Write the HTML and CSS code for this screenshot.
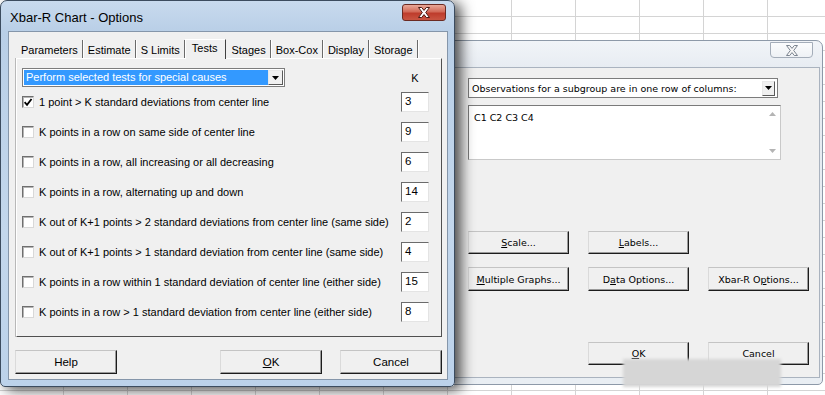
FILE: index.html
```html
<!DOCTYPE html>
<html lang="en">
<head>
    <meta charset="UTF-8" />
    <title>Xbar-R Chart - Options</title>
    <link rel="stylesheet" href="styles.css">
</head>
<body>

<div class="win back">
    <div class="titlebar">
        <span class="close gray">
            <svg width="14" height="11" viewBox="0 0 14 11"><path d="M1.5 0.5h3.2L7 3.4 9.3 0.5h3.2L8.7 5.5l3.8 5H9.3L7 7.6 4.7 10.5H1.5l3.8-5z" fill="#f6f6f6" stroke="#7c8591" stroke-width="1"/></svg>
        </span>
    </div>
    <div class="client">
        <div class="combo plain">
            <span class="combo-text">Observations for a subgroup are in one row of columns:</span>
            <span class="combo-btn"><svg width="7" height="4" viewBox="0 0 7 4"><path d="M0 0h7L3.5 4z" fill="#000"/></svg></span>
        </div>
        <div class="listbox">
            <span class="list-text">C1 C2 C3 C4</span>
            <span class="scroll">
                <svg width="7" height="4" viewBox="0 0 7 4"><path d="M0 4h7L3.5 0z" fill="#b4b4b4"/></svg>
                <svg width="7" height="4" viewBox="0 0 7 4"><path d="M0 0h7L3.5 4z" fill="#b4b4b4"/></svg>
            </span>
        </div>
        <div class="btn-row first">
            <button class="btn"><u>S</u>cale...</button>
            <button class="btn"><u>L</u>abels...</button>
        </div>
        <div class="btn-row second">
            <button class="btn"><u>M</u>ultiple Graphs...</button>
            <button class="btn">D<u>a</u>ta Options...</button>
            <button class="btn">Xbar-R O<u>p</u>tions...</button>
        </div>
        <div class="btn-row third">
            <button class="btn"><u>O</u>K</button>
            <button class="btn">Cancel</button>
        </div>
    </div>
</div>

<div class="win front">
    <div class="titlebar">
        <span class="title">Xbar-R Chart - Options</span>
        <span class="close red">
            <svg width="14" height="11" viewBox="0 0 14 11"><path d="M1.5 0.5h3.2L7 3.4 9.3 0.5h3.2L8.7 5.5l3.8 5H9.3L7 7.6 4.7 10.5H1.5l3.8-5z" fill="#fff" stroke="#4a1a14" stroke-width="1"/></svg>
        </span>
    </div>
    <div class="client">
        <div class="tabs">
            <span class="tab">Parameters</span>
            <span class="tab">Estimate</span>
            <span class="tab">S Limits</span>
            <span class="tab active">Tests</span>
            <span class="tab">Stages</span>
            <span class="tab">Box-Cox</span>
            <span class="tab">Display</span>
            <span class="tab">Storage</span>
        </div>
        <div class="panel">
            <div class="panel-head">
                <div class="combo selected">
                    <span class="combo-text">Perform selected tests for special causes</span>
                    <span class="combo-btn"><svg width="7" height="4" viewBox="0 0 7 4"><path d="M0 0h7L3.5 4z" fill="#000"/></svg></span>
                </div>
                <span class="k-label">K</span>
            </div>
            <div class="test-row">
                <span class="check on"><svg width="11" height="11" viewBox="0 0 11 11"><path d="M1.8 5.2l2.6 2.8L9.4 1.6" fill="none" stroke="#000" stroke-width="2"/></svg></span>
                <span class="test-label">1 point &gt; K standard deviations from center line</span>
                <span class="k-input">3</span>
            </div>
            <div class="test-row">
                <span class="check"></span>
                <span class="test-label">K points in a row on same side of center line</span>
                <span class="k-input">9</span>
            </div>
            <div class="test-row">
                <span class="check"></span>
                <span class="test-label">K points in a row, all increasing or all decreasing</span>
                <span class="k-input">6</span>
            </div>
            <div class="test-row">
                <span class="check"></span>
                <span class="test-label">K points in a row, alternating up and down</span>
                <span class="k-input">14</span>
            </div>
            <div class="test-row">
                <span class="check"></span>
                <span class="test-label">K out of K+1 points &gt; 2 standard deviations from center line (same side)</span>
                <span class="k-input">2</span>
            </div>
            <div class="test-row">
                <span class="check"></span>
                <span class="test-label">K out of K+1 points &gt; 1 standard deviation from center line (same side)</span>
                <span class="k-input">4</span>
            </div>
            <div class="test-row">
                <span class="check"></span>
                <span class="test-label">K points in a row within 1 standard deviation of center line (either side)</span>
                <span class="k-input">15</span>
            </div>
            <div class="test-row">
                <span class="check"></span>
                <span class="test-label">K points in a row &gt; 1 standard deviation from center line (either side)</span>
                <span class="k-input">8</span>
            </div>
        </div>
        <div class="actions">
            <button class="btn">Help</button>
            <button class="btn ok"><u>O</u>K</button>
            <button class="btn">Cancel</button>
        </div>
    </div>
</div>

<div class="smudge"></div>

</body>
</html>
```

FILE: styles.css
```css
body {
    margin: 0;
    width: 825px;
    height: 395px;
    overflow: hidden;
    position: relative;
    font-family: "Liberation Sans", Arial, sans-serif;
    font-size: 11px;
    color: #000;
    background-color: #fff;
    background-image:
        linear-gradient(to right, #d4d4d4 1px, transparent 1px),
        linear-gradient(to bottom, #d4d4d4 1px, transparent 1px);
    background-size: 64px 17px;
    background-position: 63px 16px;
}

/* windows */
.win {
    position: absolute;
    box-sizing: border-box;
    border: 1px solid;
    border-radius: 7px 7px 5px 5px;
    display: flex;
    flex-direction: column;
}
.front {
    left: 0;
    top: 0;
    width: 455px;
    height: 387px;
    padding: 0 6px 6px 7px;
    border-color: #3c4c5f;
    background: linear-gradient(#c8daee, #b9cfe7 30px, #c3d7ec 60%, #bcd2ea);
    box-shadow: 6px 3px 14px rgba(0, 0, 0, 0.7);
    z-index: 2;
}
.back {
    left: 440px;
    top: 40px;
    width: 383px;
    height: 345px;
    padding: 0 2px 6px 8px;
    border-color: #8d99a8;
    background: linear-gradient(#f1f4f8, #e6ebf1 30px, #e9eef3);
    z-index: 1;
}
.titlebar {
    flex-shrink: 0;
    display: flex;
    align-items: flex-start;
}
.front .titlebar {
    height: 30px;
}
.back .titlebar {
    height: 26px;
}
.title {
    font-size: 13px;
    margin: 9px 0 0 2px;
}
.close {
    box-sizing: border-box;
    margin-left: auto;
    display: flex;
    align-items: center;
    justify-content: center;
    border: 1px solid;
    border-radius: 0 0 4px 4px;
}
.close.red {
    width: 44px;
    height: 17px;
    margin-top: 3px;
    margin-right: 2px;
    border-color: #6b2a22;
    border-radius: 3px;
    background: linear-gradient(#e9a899, #d26a58 45%, #be3c2c 55%, #c95542);
}
.close.gray {
    width: 43px;
    height: 16px;
    margin-top: 1px;
    margin-right: 7px;
    border-color: #a4adb9;
    background: linear-gradient(#fbfcfd, #eef1f5);
}
.client {
    flex: 1;
    box-sizing: border-box;
    background: #f0f0f0;
    border: 1px solid #8596aa;
    display: flex;
    flex-direction: column;
}
.front .client {
    padding: 6px 5px 0 7px;
}
.back .client {
    padding: 10px 0 0 18px;
    border-color: #aab3bf;
    font-family: "DejaVu Sans", Verdana, sans-serif;
    font-size: 9.5px;
}

/* tabs */
.tabs {
    height: 20px;
    display: flex;
    align-items: flex-end;
}
.tab {
    height: 18px;
    box-sizing: border-box;
    padding: 3px 4px 0 5px;
    border-right: 1px solid #6a6a6a;
    box-shadow: 1px 0 0 #fff;
    line-height: 14px;
}
.tab.active {
    height: 20px;
    padding: 1px 8px 0 6px;
    border-left: 1px solid #fff;
    border-top: 1px solid #fff;
    border-right: 1px solid #404040;
    box-shadow: none;
    background: #f0f0f0;
    position: relative;
    top: 1px;
}
.panel {
    height: 279px;
    box-sizing: border-box;
    padding: 9px 12px 0 5px;
    border: 1px solid;
    border-color: #fff #505050 #505050 #fff;
    box-shadow: -1px 0 0 #b8b8b8;
}
.panel-head {
    height: 19px;
    display: flex;
    align-items: center;
    justify-content: space-between;
}
.k-label {
    width: 28px;
    text-align: center;
    padding-top: 1px;
}
.test-row {
    height: 30px;
    display: flex;
    align-items: center;
}
.check {
    width: 12px;
    height: 12px;
    box-sizing: border-box;
    flex-shrink: 0;
    display: flex;
    align-items: center;
    justify-content: center;
    border: 1px solid;
    border-color: #6f6f6f #d8d8d8 #d8d8d8 #6f6f6f;
    background: #fff;
    box-shadow: inset 1px 1px 0 #b4b4b4;
}
.test-label {
    margin-left: 5px;
    white-space: nowrap;
}
.k-input {
    margin-left: auto;
    width: 28px;
    height: 20px;
    box-sizing: border-box;
    padding: 2px 0 0 3px;
    border: 1px solid;
    border-color: #6b6b6b #e4e4e4 #e4e4e4 #6b6b6b;
    background: #fff;
    font-size: 11.5px;
}

/* combo boxes */
.combo {
    box-sizing: border-box;
    display: flex;
    align-items: center;
    background: #fff;
    border: 1px solid #7c7c7c;
}
.combo.selected {
    width: 263px;
    height: 19px;
    padding: 1px;
}
.combo.selected .combo-text {
    flex: 1;
    height: 15px;
    line-height: 15px;
    padding-left: 2px;
    background: #3399ff;
    color: #fff;
}
.combo.plain {
    width: 310px;
    height: 20px;
    padding: 1px 1px 1px 3px;
}
.combo.plain .combo-text {
    flex: 1;
}
.combo-btn {
    width: 15px;
    height: 15px;
    box-sizing: border-box;
    display: flex;
    align-items: center;
    justify-content: center;
    background: #f0f0f0;
    border: 1px solid;
    border-color: #e8e8e8 #5a5a5a #5a5a5a #e8e8e8;
}
.combo.plain .combo-btn {
    width: 13px;
    margin-right: 1px;
}

/* list box */
.listbox {
    width: 313px;
    height: 55px;
    margin-top: 7px;
    box-sizing: border-box;
    display: flex;
    background: #fff;
    border: 1px solid;
    border-color: #7a7a7a #c9c9c9 #c9c9c9 #7a7a7a;
}
.list-text {
    flex: 1;
    padding: 6px 0 0 5px;
}
.scroll {
    width: 16px;
    display: flex;
    flex-direction: column;
    justify-content: space-between;
    align-items: center;
    padding: 6px 0 6px;
}

/* buttons */
.btn {
    width: 101px;
    height: 23px;
    padding: 0;
    box-sizing: border-box;
    font: inherit;
    color: #000;
    background: #f0f0f0;
    border: 1px solid;
    border-color: #c4c4c4 #1c1c1c #1c1c1c #dadada;
    box-shadow: inset -1px -1px 0 #9a9a9a;
}
.actions {
    display: flex;
    margin: 13px 0 0 -1px;
}
.actions .btn {
    height: 24px;
    width: 102px;
    font-size: 11.5px;
}
.actions .ok {
    margin-left: auto;
    margin-right: 18px;
}
.btn-row {
    width: 341px;
    display: flex;
    gap: 19px;
}
.btn-row.first {
    margin-top: 71px;
}
.btn-row.second {
    margin-top: 13px;
}
.btn-row.second .btn {
    height: 24px;
}
.btn-row.third {
    margin-top: 51px;
    justify-content: flex-end;
}

/* blurred patch over the back dialog */
.smudge {
    position: absolute;
    left: 623px;
    top: 359px;
    width: 158px;
    height: 28px;
    background: #d6d6d6;
    filter: blur(1.5px);
    z-index: 3;
}
```
